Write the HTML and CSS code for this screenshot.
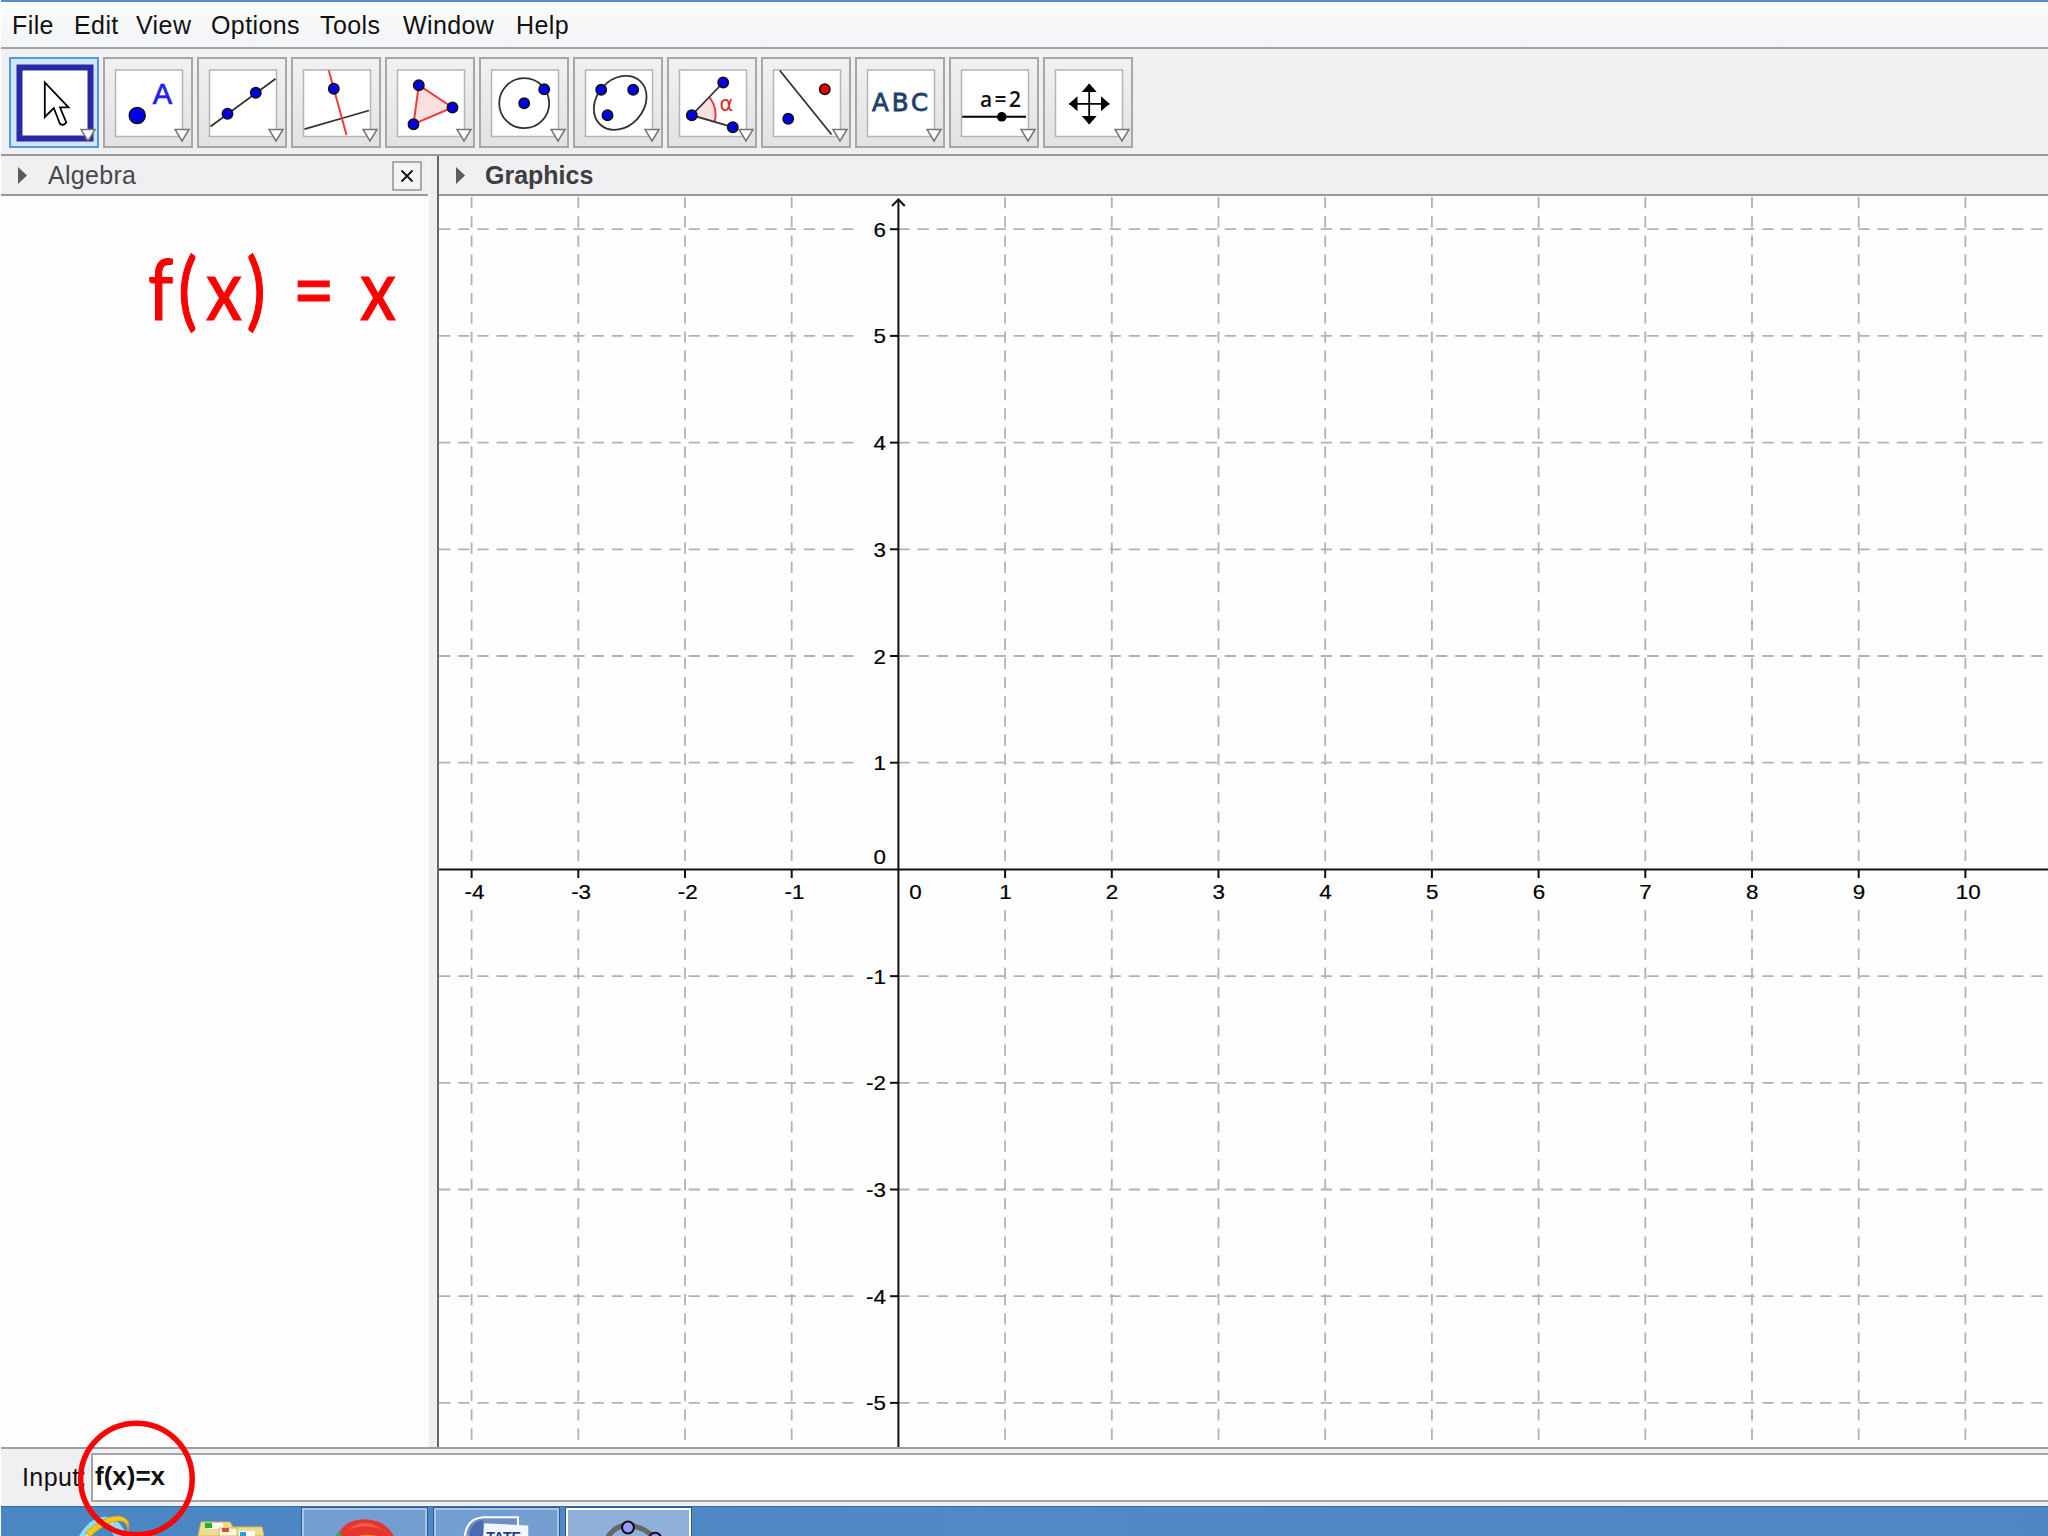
FILE: index.html
```html
<!doctype html>
<html lang="en">
<head>
    <meta charset="utf-8">
    <title>GeoGebra</title>
    <link rel="stylesheet" href="styles.css">
</head>
<body>
    <div class="window">
        <div class="menubar">
            <span>File</span>
            <span>Edit</span>
            <span>View</span>
            <span>Options</span>
            <span>Tools</span>
            <span>Window</span>
            <span>Help</span>
        </div>

        <div class="toolbar">
            <div class="tool selected">
                <svg viewBox="0 0 90 90">
                    <rect class="frame" x="9.5" y="9.5" width="71" height="71"/>
                    <path d="M34.8 24.5V59l9-9 6 15.5q3.5 3 6.5-1L50 49.3h8.5z" fill="#fff" stroke="#000" stroke-width="1.8"/>
                    <path class="drop" d="M71 71.5h14l-7 11.5z"/>
                </svg>
            </div>
            <div class="tool">
                <svg viewBox="0 0 90 90">
                    <rect class="frame" x="11.5" y="12" width="67" height="66.5"/>
                    <circle class="dot" cx="33.2" cy="57.5" r="8"/>
                    <text x="58.5" y="45.8" font-size="29" text-anchor="middle" fill="#2020f0" stroke="#2020f0" stroke-width="0.7">A</text>
                    <path class="drop" d="M71 71.5h14l-7 11.5z"/>
                </svg>
            </div>
            <div class="tool">
                <svg viewBox="0 0 90 90">
                    <rect class="frame" x="11.5" y="12" width="67" height="66.5"/>
                    <path class="line" d="M12.5 68.5L77.5 20.8"/>
                    <circle class="dot" cx="29.5" cy="55.8" r="5.2"/>
                    <circle class="dot" cx="57.8" cy="34.8" r="5.2"/>
                    <path class="drop" d="M71 71.5h14l-7 11.5z"/>
                </svg>
            </div>
            <div class="tool">
                <svg viewBox="0 0 90 90">
                    <rect class="frame" x="11.5" y="12" width="67" height="66.5"/>
                    <path class="line" d="M12.5 71.2L77 52.5"/>
                    <path class="red" d="M36.8 12.5L54.5 77"/>
                    <circle class="dot" cx="41.8" cy="30.8" r="5.2"/>
                    <path class="drop" d="M71 71.5h14l-7 11.5z"/>
                </svg>
            </div>
            <div class="tool">
                <svg viewBox="0 0 90 90">
                    <rect class="frame" x="11.5" y="12" width="67" height="66.5"/>
                    <path class="red area" d="M32.8 27.2L66.5 49.5 27.5 66.2z"/>
                    <circle class="dot" cx="32.8" cy="27.2" r="5.2"/>
                    <circle class="dot" cx="66.5" cy="49.5" r="5.2"/>
                    <circle class="dot" cx="27.5" cy="66.2" r="5.2"/>
                    <path class="drop" d="M71 71.5h14l-7 11.5z"/>
                </svg>
            </div>
            <div class="tool">
                <svg viewBox="0 0 90 90">
                    <rect class="frame" x="11.5" y="12" width="67" height="66.5"/>
                    <circle class="line" cx="44.2" cy="45.2" r="25"/>
                    <circle class="dot" cx="44.2" cy="45.2" r="5.2"/>
                    <circle class="dot" cx="64.2" cy="31.2" r="5.2"/>
                    <path class="drop" d="M71 71.5h14l-7 11.5z"/>
                </svg>
            </div>
            <div class="tool">
                <svg viewBox="0 0 90 90">
                    <rect class="frame" x="11.5" y="12" width="67" height="66.5"/>
                    <ellipse class="line" cx="46.2" cy="44.8" rx="29.5" ry="23.5" transform="rotate(-48 46.2 44.8)"/>
                    <circle class="dot" cx="27.2" cy="31.8" r="5.2"/>
                    <circle class="dot" cx="59.2" cy="31.8" r="5.2"/>
                    <circle class="dot" cx="33.5" cy="57.2" r="5.2"/>
                    <path class="drop" d="M71 71.5h14l-7 11.5z"/>
                </svg>
            </div>
            <div class="tool">
                <svg viewBox="0 0 90 90">
                    <rect class="frame" x="11.5" y="12" width="67" height="66.5"/>
                    <path d="M23.8 57.2L41.8 39.5Q50 51 46.8 63.5z" fill="#fbe0e0"/>
                    <path class="red" d="M41.8 39.5Q50 51 46.8 63.5"/>
                    <path class="line" d="M55.2 24.5L23.8 57.2 64.8 69.2"/>
                    <circle class="dot" cx="55.2" cy="24.5" r="5.2"/>
                    <circle class="dot" cx="23.8" cy="57.2" r="5.2"/>
                    <circle class="dot" cx="64.8" cy="69.2" r="5.2"/>
                    <text class="alpha" x="51.5" y="52.5">α</text>
                    <path class="drop" d="M71 71.5h14l-7 11.5z"/>
                </svg>
            </div>
            <div class="tool">
                <svg viewBox="0 0 90 90">
                    <rect class="frame" x="11.5" y="12" width="67" height="66.5"/>
                    <path class="line" d="M17.8 12.5L69.5 76.5"/>
                    <circle class="dot free" cx="62.8" cy="31.2" r="5.2"/>
                    <circle class="dot" cx="26.2" cy="60.8" r="5.2"/>
                    <path class="drop" d="M71 71.5h14l-7 11.5z"/>
                </svg>
            </div>
            <div class="tool">
                <svg viewBox="0 0 90 90">
                    <rect class="frame" x="11.5" y="12" width="67" height="66.5"/>
                    <text class="abc" x="16" y="53.2" textLength="56">ABC</text>
                    <path class="drop" d="M71 71.5h14l-7 11.5z"/>
                </svg>
            </div>
            <div class="tool">
                <svg viewBox="0 0 90 90">
                    <rect class="frame" x="11.5" y="12" width="67" height="66.5"/>
                    <text class="slider" x="30" y="49.2" textLength="41">a=2</text>
                    <path d="M12.2 58.8H76" stroke="#000" stroke-width="2"/>
                    <circle cx="51.8" cy="58.8" r="4.8"/>
                    <path class="drop" d="M71 71.5h14l-7 11.5z"/>
                </svg>
            </div>
            <div class="tool">
                <svg viewBox="0 0 90 90">
                    <rect class="frame" x="11.5" y="12" width="67" height="66.5"/>
                    <path d="M25 45.8H65.5M45.2 26V66" stroke="#000" stroke-width="1.8"/>
                    <path d="M45.2 25.5l7.5 8.5h-15zM45.2 66.5l7.5-8.5h-15zM25 45.8l8.5-7.5v15zM65.5 45.8l-8.5-7.5v15z"/>
                    <path class="drop" d="M71 71.5h14l-7 11.5z"/>
                </svg>
            </div>
        </div>

        <div class="views">
            <div class="algebra">
                <div class="view-title">
                    <svg class="arrow" viewBox="0 0 9 17"><path d="M0 0L9 8.5 0 17z"/></svg>
                    <span>Algebra</span>
                    <svg class="close" viewBox="0 0 30 30">
                        <rect x="1" y="1" width="28" height="28"/>
                        <path d="M9.5 9.5L20.500 20.500M20.500 9.500L9.500 20.500"/>
                    </svg>
                </div>
            </div>
            <div class="graphics">
                <div class="view-title bold">
                    <svg class="arrow" viewBox="0 0 9 17"><path d="M0 0L9 8.5 0 17z"/></svg>
                    <span>Graphics</span>
                </div>
                <!-- viewBox keeps window coordinates -->
                <svg class="plot" id="plot" viewBox="439 196 1609 1251"></svg>
            </div>
        </div>

        <div class="inputbar">
            <label>Input:</label>
            <div class="field">f(x)=x</div>
        </div>

        <div class="taskbar">
            <div class="task pinned">
                <svg viewBox="0 0 70 29">
                    <path d="M8 29Q20 8 37 10 50 13 56 29H43Q38 18 32 18 26 18 19 29z" fill="#8fdcf7"/>
                    <path d="M16 29Q27 13 43 15" fill="none" stroke="#d8f4fc" stroke-width="3"/>
                    <path d="M14 26Q34 8 48 9 61 11 57 24 57 13 47 14 34 15 20 29z" fill="#f3c921" stroke="#d59b12"/>
                </svg>
            </div>
            <div class="task pinned">
                <svg viewBox="0 0 70 29">
                    <path d="M7 29L10 15H39L42 20H71L73 29z" fill="#f0dc91" stroke="#d2b65a"/>
                    <path d="M17 16H32V22H17z" fill="#fff"/>
                    <path d="M14 16h7v5h-7z" fill="#18b52d"/>
                    <path d="M28 21H46V29H28z" fill="#fff8dc" stroke="#d2b65a"/>
                    <path d="M31 21h7v4h-7z" fill="#d75032"/>
                    <path d="M48 24H64V29H48z" fill="#fff"/>
                    <path d="M49 25h6v4h-6z" fill="#2e9ade"/>
                </svg>
            </div>
            <div class="task open">
                <svg viewBox="0 0 122 28">
                    <path d="M34 28Q41 11 61 11T90 28z" fill="#e5352f"/>
                    <path d="M45 21Q61 8 78 21 62 15 45 21z" fill="#f0594c"/>
                    <path d="M52 28Q63 24 76 28z" fill="#f58238"/>
                    <path d="M33 28Q34 24 37 23L39 28z" fill="#3aa848"/>
                </svg>
            </div>
            <div class="task open">
                <svg viewBox="0 0 122 28">
                    <path d="M30 28Q32 10 48 9H82V28z" fill="#6d8fc5" stroke="#fff" stroke-width="2"/>
                    <path d="M34 28Q36 13 48 12V28z" fill="#4a6cae"/>
                    <path d="M49 15L92 17V28H48z" fill="#f2f7fd"/>
                    <text x="51" y="33" class="doc" textLength="34">TATE</text>
                </svg>
            </div>
            <div class="task open active">
                <svg viewBox="0 0 122 28">
                    <path d="M39 32Q46 17 60 17T88 30" fill="none" stroke="#666" stroke-width="5"/>
                    <circle cx="60.5" cy="19" r="5.8"/>
                    <circle cx="87" cy="30" r="5.8"/>
                </svg>
            </div>
        </div>

        <!-- red annotations drawn over the window -->
        <svg class="notes" viewBox="0 0 2048 1536">
            <text x="176.2 212 245.2 293.5 330 348.5 400 428.6" y="320.5" transform="scale(0.84 1)">f(x) = x</text>
            <circle cx="136.4" cy="1479" r="55.8"/>
        </svg>
    </div>

    <script>
        var plot = document.getElementById("plot");
        var OX = 898.4, OY = 869.4, UNIT = 106.7;

        function add(name, attrs, text) {
            var el = document.createElementNS("http://www.w3.org/2000/svg", name);
            for (var key in attrs) {
                el.setAttribute(key, attrs[key]);
            }
            if (text !== undefined) {
                el.textContent = text;
            }
            plot.appendChild(el);
        }

        function line(cls, x1, y1, x2, y2) {
            add("line", { "class": cls, x1: x1, y1: y1, x2: x2, y2: y2 });
        }

        function label(text, x, y, anchor) {
            add("text", {
                transform: "translate(" + x + " " + y + ") scale(1.12 1)",
                "text-anchor": anchor
            }, text);
        }

        // vertical grid lines, broken around the x axis labels
        for (var i = -4; i <= 10; i++) {
            if (i === 0) continue;
            var x = OX + i * UNIT;
            line("grid", x, 197, x, 862);
            line("grid", x, 910, x, 1441);
            line("axis", x, OY, x, 878);
            label(i, x + (i < 0 || i > 9 ? 2.8 : 0.3), 898.5, "middle");
        }

        // horizontal grid lines, broken around the y axis labels
        for (var j = -5; j <= 6; j++) {
            if (j === 0) continue;
            var y = OY - j * UNIT;
            line("grid", 439, y, 855, y);
            line("grid", OX, y, 2048, y);
            line("axis", 890, y, OX, y);
            label(j, 886, y + 7.5, "end");
        }

        line("axis", 439, OY, 2048, OY);
        line("axis", OX, 199, OX, 1447);
        add("path", { "class": "axis", d: "M892 206L898.4 199.5 904.8 206" });
        label(0, 915.5, 898.5, "middle");
        label(0, 886, 864, "end");
    </script>
</body>
</html>
```
FILE: styles.css
```css
body {
    margin: 0;
    background: #fff;
    font-family: "Liberation Sans", Arial, sans-serif;
    font-size: 25px;
    color: #111;
}

.window {
    position: relative;
    display: flex;
    flex-direction: column;
    width: 2048px;
    height: 1536px;
    box-sizing: border-box;
    padding-left: 1px;
    overflow: hidden;
}

/* menu */
.menubar {
    display: grid;
    grid-template-columns: 62px 62px 75px 109px 83px 113px 80px;
    height: 49px;
    box-sizing: border-box;
    padding-left: 11px;
    border-top: 2px solid #5b8ccb;
    border-bottom: 2px solid #a3a2a5;
    background: linear-gradient(#fafbfc, #f3f4f7);
    line-height: 46px;
    letter-spacing: 0.4px;
}

/* toolbar */
.toolbar {
    display: flex;
    gap: 4px;
    height: 107px;
    box-sizing: border-box;
    padding: 8px 0 0 8px;
    border-bottom: 2px solid #99989a;
    background: #f0eff1;
}

.tool {
    width: 90px;
    height: 91px;
    box-sizing: border-box;
    border: 2px solid #a7a6a9;
    background: linear-gradient(#f1f1f2, #e2e2e4);
}

.tool svg {
    display: block;
    width: 90px;
    height: 90px;
    margin: -1.5px -1.5px 0;
}

.tool.selected {
    border-color: #5698dc;
    background: #cfe5fa;
}

.frame {
    fill: #fff;
    stroke: #b5b4b7;
    stroke-width: 1.5;
}

.selected .frame {
    stroke: #2a2aa6;
    stroke-width: 6;
}

.drop {
    fill: #fff;
    stroke: #777;
    stroke-width: 1.5;
}

.dot {
    fill: #0000e6;
    stroke: #111;
    stroke-width: 1.5;
}

.dot.free {
    fill: #e00000;
}

.line {
    fill: none;
    stroke: #333;
    stroke-width: 1.8;
}

.red {
    fill: none;
    stroke: #ee3b3b;
    stroke-width: 2;
}

.area {
    fill: #fbe0e0;
}

.alpha {
    font: 21px "DejaVu Sans", sans-serif;
    fill: #dc3030;
}

.abc {
    font: 24.5px "DejaVu Sans", sans-serif;
    fill: #20406c;
    stroke: #20406c;
    stroke-width: 0.8;
}

.slider {
    font: 600 21px "Open Sans", sans-serif;
    fill: #111;
}

/* views */
.views {
    display: flex;
    height: 1291px;
}

.algebra {
    width: 427px;
    background: #fefefe;
    border-right: 1px solid #fafafa;
}

.graphics {
    flex: 1;
    margin-left: 8px;
    border-left: 2px solid #68676a;
    background: #fefefe;
    box-shadow: -8px 0 0 #efeef0;
}

.view-title {
    display: flex;
    align-items: center;
    height: 40px;
    box-sizing: border-box;
    padding: 1px 6px 0 17px;
    border-bottom: 2px solid #99989b;
    background: #f0eff1;
    color: #48484c;
    letter-spacing: 0.3px;
}

.view-title.bold {
    font-weight: bold;
    color: #3d3d42;
    letter-spacing: 0;
}

.arrow {
    width: 9px;
    height: 17px;
    margin-right: 21px;
    fill: #5d5d5f;
}

.bold .arrow {
    margin-right: 20px;
}

.close {
    width: 30px;
    height: 30px;
    margin-left: auto;
    fill: #f3f3f4;
    stroke: #a2a1a4;
    stroke-width: 1.8;
}

.close path {
    stroke: #111;
}

.plot {
    display: block;
    width: 1609px;
    height: 1251px;
}

.plot text {
    font-size: 20px;
    fill: #000;
    stroke: #000;
    stroke-width: 0.2;
}

.grid {
    stroke: #b3b1b4;
    stroke-width: 1.8;
    stroke-dasharray: 11.3 7.9;
}

.axis {
    fill: none;
    stroke: #111;
    stroke-width: 2;
}

/* input bar */
.inputbar {
    display: flex;
    height: 59px;
    box-sizing: border-box;
    padding: 4px 0;
    border-top: 2px solid #9d9c9e;
    background: #f0eff1;
}

.inputbar label {
    width: 69px;
    padding-left: 21px;
    line-height: 49px;
    letter-spacing: 0.4px;
}

.field {
    flex: 1;
    height: 49px;
    box-sizing: border-box;
    padding-left: 2px;
    border: 2px solid #a4a3a5;
    border-right: 0;
    background: #fff;
    font-size: 26px;
    font-weight: bold;
    line-height: 42px;
}

/* taskbar */
.taskbar {
    display: flex;
    height: 30px;
    box-sizing: border-box;
    padding-left: 70px;
    border-top: 1px solid #346ca4;
    background: linear-gradient(90deg, #4a86c2, #5089c6 50%, #4c86c4);
}

.task {
    width: 127px;
    box-sizing: border-box;
    margin-right: 5px;
    overflow: hidden;
}

.task svg {
    display: block;
    overflow: visible;
}

.pinned {
    width: 76px;
    margin-right: 44px;
}

.pinned svg {
    width: 70px;
}

.pinned + .pinned {
    margin-right: 34px;
}

.open {
    border: 1px solid #2f5f91;
    border-bottom: 0;
    box-shadow: inset 0 2px #a9c6e6, inset 2px 0 #a9c6e6, inset -2px 0 #a9c6e6;
    background: #749ed1;
}

.active {
    box-shadow: inset 0 2px #fff, inset 2px 0 #fff, inset -2px 0 #fff;
    background: #8fb0d9;
}

.active circle {
    fill: #9999ff;
    stroke: #111;
    stroke-width: 2;
}

.doc {
    font: bold 14px "Liberation Sans", sans-serif;
    fill: #1b3c93;
}

.notes {
    position: absolute;
    top: 0;
    left: 0;
    width: 2048px;
    height: 1536px;
    pointer-events: none;
}

.notes text {
    font: 86px Lato, sans-serif;
    fill: #fc0000;
    stroke: #fc0000;
    stroke-width: 1.2;
}

.notes circle {
    fill: none;
    stroke: #f80505;
    stroke-width: 5.5;
}
```
